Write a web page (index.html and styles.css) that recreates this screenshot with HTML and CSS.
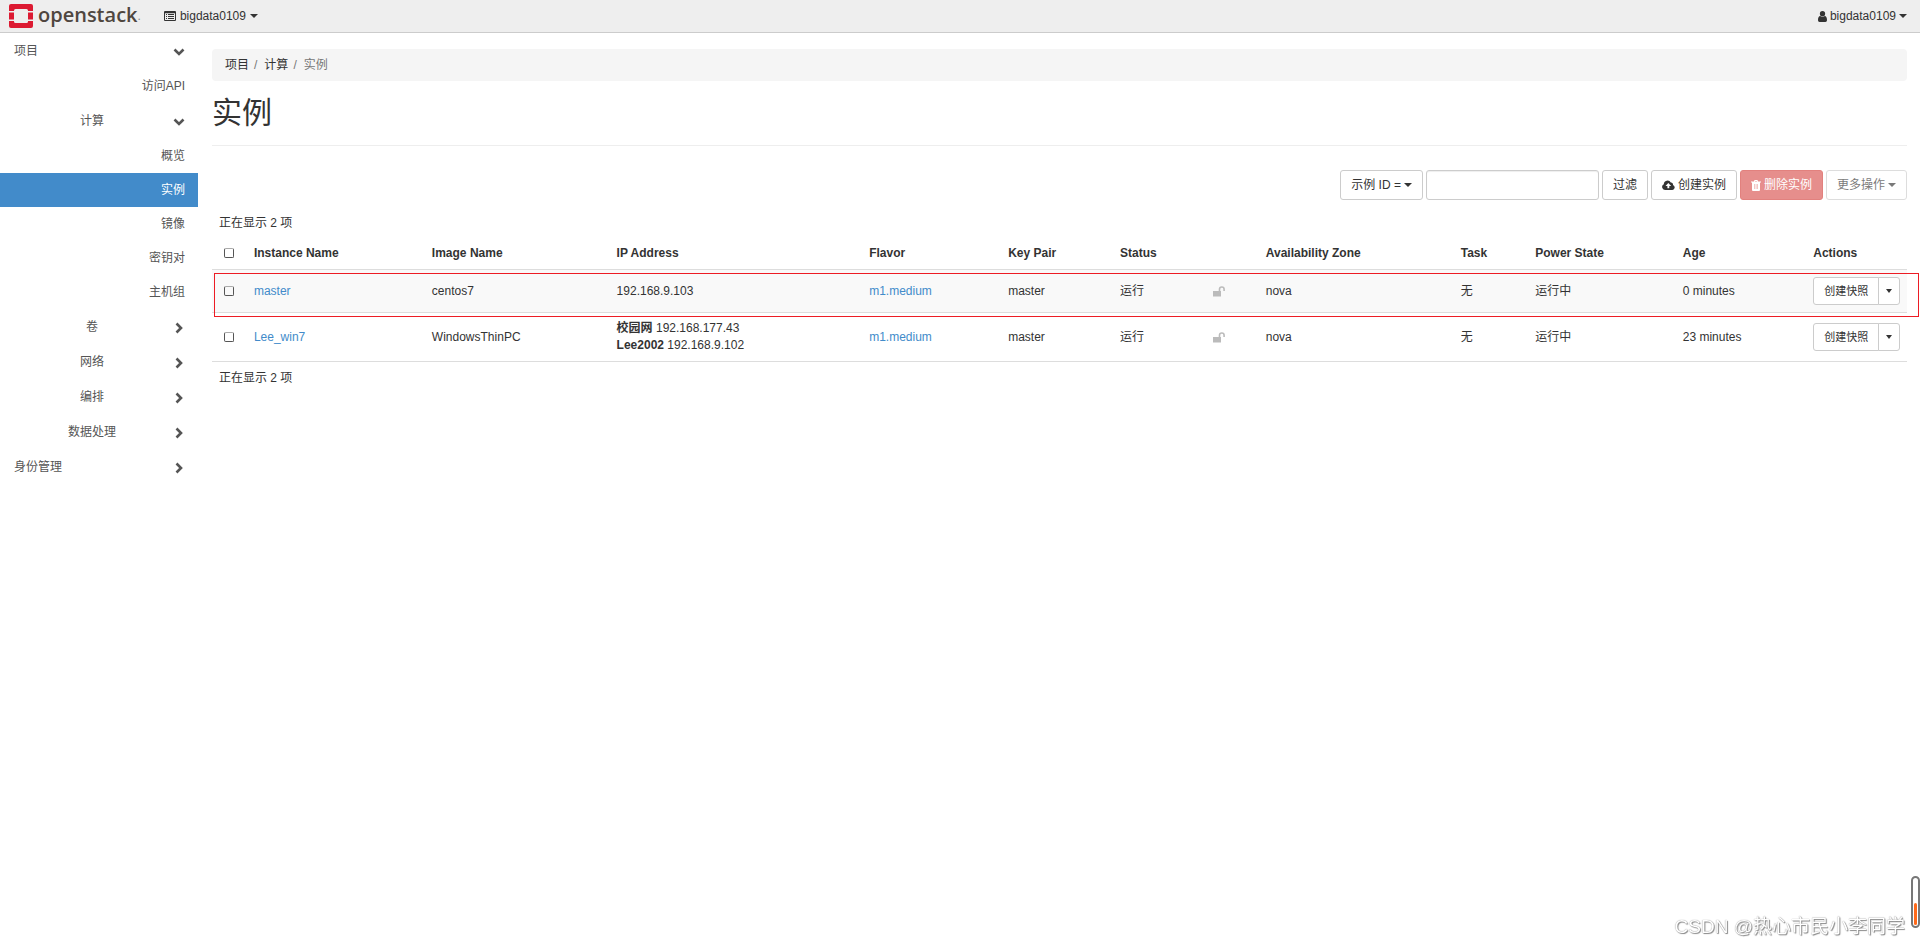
FILE: index.html
```html
<!DOCTYPE html>
<html lang="zh-CN">
<head>
<meta charset="utf-8">
<title>实例 - OpenStack Dashboard</title>
<link rel="stylesheet" href="styles.css">
</head>
<body>
<svg class="defs" aria-hidden="true">
  <symbol id="down" viewBox="0 0 12 8"><path d="M1.500 1.500 6 6l4.500-4.500" fill="none" stroke="currentColor" stroke-width="2.600"/></symbol>
  <symbol id="right" viewBox="0 0 8 12"><path d="M1.500 1.500 6 6 1.500 10.500" fill="none" stroke="currentColor" stroke-width="2.600"/></symbol>
  <symbol id="lock" viewBox="0 0 12 11"><path d="M0 5h8v5.500H0z" fill="currentColor"/><path d="M6.500 5.500V3.300a2.300 2.300 0 0 1 4.600 0V5" fill="none" stroke="currentColor" stroke-width="1.600"/></symbol>
</svg>

<header class="topbar">
  <a class="brand" href="#" aria-label="openstack">
    <svg class="brand-mark" viewBox="0 0 24 24" aria-hidden="true">
      <path fill="#dc1a32" d="M2 0h20a2 2 0 0 1 2 2v5h-5V6.500A1.500 1.500 0 0 0 17.500 5h-11A1.500 1.500 0 0 0 5 6.500V7H0V2a2 2 0 0 1 2-2zM0 8.500h5v7H0zM19 8.500h5v7h-5zM0 17h5v.5A1.500 1.500 0 0 0 6.500 19h11a1.500 1.500 0 0 0 1.500-1.500V17h5v5a2 2 0 0 1-2 2H2a2 2 0 0 1-2-2z"/>
    </svg>
    <span class="brand-name">openstack</span><span class="brand-dot">.</span>
  </a>
  <button class="top-menu" type="button">
    <svg width="12" height="10" viewBox="0 0 12 10" aria-hidden="true"><path fill="currentColor" fill-rule="evenodd" d="M1 0h10a1 1 0 0 1 1 1v8a1 1 0 0 1-1 1H1a1 1 0 0 1-1-1V1a1 1 0 0 1 1-1zm0 2.300V9h10V2.300zM2 3h1v1H2zm2 0h6v1H4zM2 5h1v1H2zm2 0h6v1H4zM2 7h1v1H2zm2 0h6v1H4z"/></svg>
    bigdata0109 <span class="caret"></span>
  </button>
  <button class="top-menu user-menu" type="button">
    <svg width="9" height="11" viewBox="0 0 9 11" aria-hidden="true"><path fill="currentColor" d="M4.500 0a2.600 2.700 0 0 1 0 5.500 2.600 2.700 0 0 1 0-5.500zM2.300 5A3.200 3.200 0 0 0 6.700 5C8.300 5.200 9 6.600 9 9c0 1.200-.6 2-1.600 2H1.600C.6 11 0 10.200 0 9c0-2.400.7-3.800 2.300-4z"/></svg>
    bigdata0109 <span class="caret"></span>
  </button>
</header>

<div class="layout">
  <nav class="sidebar">
    <button class="item group" type="button"><span>项目</span><svg class="chev-down"><use href="#down"/></svg></button>
    <a class="item leaf" href="#">访问API</a>
    <button class="item group sub" type="button"><span>计算</span><svg class="chev-down"><use href="#down"/></svg></button>
    <a class="item leaf" href="#">概览</a>
    <a class="item leaf panel active" href="#">实例</a>
    <a class="item leaf panel" href="#">镜像</a>
    <a class="item leaf panel" href="#">密钥对</a>
    <a class="item leaf panel" href="#">主机组</a>
    <button class="item group sub" type="button"><span>卷</span><svg class="chev-right"><use href="#right"/></svg></button>
    <button class="item group sub" type="button"><span>网络</span><svg class="chev-right"><use href="#right"/></svg></button>
    <button class="item group sub" type="button"><span>编排</span><svg class="chev-right"><use href="#right"/></svg></button>
    <button class="item group sub" type="button"><span>数据处理</span><svg class="chev-right"><use href="#right"/></svg></button>
    <button class="item group" type="button"><span>身份管理</span><svg class="chev-right"><use href="#right"/></svg></button>
  </nav>

  <main class="content">
    <ol class="breadcrumb">
      <li><a href="#">项目</a></li>
      <li><a href="#">计算</a></li>
      <li class="current">实例</li>
    </ol>
    <h1>实例</h1>

    <form class="toolbar">
      <button class="btn" type="button">示例 ID = <span class="caret"></span></button>
      <input class="filter" type="text" aria-label="过滤">
      <button class="btn" type="button">过滤</button>
      <button class="btn" type="button"><svg width="13" height="10" viewBox="0 0 13 10" aria-hidden="true"><path fill="currentColor" fill-rule="evenodd" d="M3 10a3 3 0 0 1-1.200-5.700A3.700 3.700 0 0 1 8.800 2.600 2 2 0 0 1 11 5a2.600 2.600 0 0 1-.6 5zM6.300 3 3.500 5.900h1.900v2.400h1.900V5.900h1.900z"/></svg> 创建实例</button>
      <button class="btn danger" type="button" disabled><svg width="10" height="11" viewBox="0 0 10 11" aria-hidden="true"><path fill="currentColor" fill-rule="evenodd" d="M3 1.500 3.500 0h3L7 1.500h3v1H9V10a1 1 0 0 1-1 1H2a1 1 0 0 1-1-1V2.500H0v-1zm1 0h2L5.800 1H4.200zM3 4v5h.5V4zm1.800 0v5h.5V4zm1.700 0v5H7V4z"/></svg> 删除实例</button>
      <button class="btn" type="button" disabled>更多操作<span class="caret"></span></button>
    </form>

    <p class="count">正在显示 2 项</p>
    <div class="table-wrap">
      <table>
        <colgroup>
          <col class="c-check"><col class="c-name"><col class="c-image"><col class="c-ip"><col class="c-flavor"><col class="c-key"><col class="c-status"><col class="c-lock"><col class="c-zone"><col class="c-task"><col class="c-power"><col class="c-age"><col class="c-actions">
        </colgroup>
        <thead>
          <tr>
            <th><input type="checkbox" aria-label="全选"></th>
            <th>Instance Name</th><th>Image Name</th><th>IP Address</th><th>Flavor</th><th>Key Pair</th><th>Status</th><th></th><th>Availability Zone</th><th>Task</th><th>Power State</th><th>Age</th><th>Actions</th>
          </tr>
        </thead>
        <tbody>
          <tr class="striped">
            <td><input type="checkbox" aria-label="master"></td>
            <td><a href="#">master</a></td><td>centos7</td><td>192.168.9.103</td><td><a href="#">m1.medium</a></td><td>master</td><td>运行</td>
            <td><svg class="lock"><use href="#lock"/></svg></td>
            <td>nova</td><td>无</td><td>运行中</td><td>0 minutes</td>
            <td><div class="split"><button class="btn small" type="button">创建快照</button><button class="btn small toggle" type="button" aria-label="更多"><span class="caret"></span></button></div></td>
          </tr>
          <tr>
            <td><input type="checkbox" aria-label="Lee_win7"></td>
            <td><a href="#">Lee_win7</a></td><td>WindowsThinPC</td><td><b>校园网</b> 192.168.177.43<br><b>Lee2002</b> 192.168.9.102</td><td><a href="#">m1.medium</a></td><td>master</td><td>运行</td>
            <td><svg class="lock"><use href="#lock"/></svg></td>
            <td>nova</td><td>无</td><td>运行中</td><td>23 minutes</td>
            <td><div class="split"><button class="btn small" type="button">创建快照</button><button class="btn small toggle" type="button" aria-label="更多"><span class="caret"></span></button></div></td>
          </tr>
        </tbody>
      </table>
      <div class="highlight"></div>
    </div>
    <p class="count">正在显示 2 项</p>
  </main>
</div>

<div class="watermark">CSDN @热心市民小李同学</div>
<div class="gauge"><div class="gauge-level"></div></div>
</body>
</html>
```

FILE: styles.css
```css
* { box-sizing: border-box; }

body {
  margin: 0;
  min-height: 100vh;
  background: #fff;
  color: #333;
  font: 12px/17px "Liberation Sans", "Noto Sans CJK SC", sans-serif;
}

button, input { font: inherit; color: inherit; }
button { background: none; border: 0; padding: 0; }
a { color: #428bca; text-decoration: none; }
.defs { display: none; }

.caret {
  display: inline-block;
  vertical-align: middle;
  border: 4px solid transparent;
  border-top-color: currentColor;
  border-bottom: 0;
}

/* Top bar */
.topbar {
  display: flex;
  align-items: center;
  height: 33px;
  padding: 0 13px 0 9px;
  background: #eee;
  border-bottom: 1px solid #ccc;
}
.brand { display: flex; align-items: center; color: #4f463f; }
.brand-mark { width: 24px; height: 24px; margin-right: 5px; }
.brand-name { padding-bottom: 2px; font: 600 20px/26px "Open Sans", "Noto Sans", sans-serif; }
.brand-dot { color: #888; }
.top-menu { display: flex; align-items: center; gap: 4px; margin-left: 23px; }
.user-menu { gap: 3px; margin-left: auto; }

/* Sidebar */
.layout { display: flex; }
.sidebar { flex: 0 0 198px; display: flex; flex-direction: column; }
.item {
  display: flex;
  align-items: center;
  height: 35px;
  padding: 2px 13px 0 14px;
  color: #555;
  text-align: left;
}
.item span { flex: 1; }
.sub span { text-align: center; }
.sub { padding-left: 11px; }
.leaf { justify-content: flex-end; }
.panel { height: 34px; padding-top: 0; }
.active { background: #428bca; color: #fff; }
.chev-down { width: 12px; height: 8px; }
.chev-right { width: 8px; height: 12px; margin: 0 2px; }

/* Content */
.content { flex: 1; min-width: 0; padding: 16px 13px 0 14px; }
.breadcrumb {
  display: flex;
  align-items: center;
  height: 32px;
  margin: 0;
  padding: 0 13px;
  list-style: none;
  background: #f5f5f5;
  border-radius: 4px;
}
.breadcrumb a { color: #333; }
.breadcrumb li + li::before { content: "/"; padding: 0 7px 0 5px; color: #777; }
.current { color: #777; }
h1 {
  margin: 0 0 24px;
  padding: 15px 0;
  font-size: 30px;
  line-height: 34px;
  font-weight: 400;
  border-bottom: 1px solid #eee;
}

.toolbar { display: flex; justify-content: flex-end; gap: 3px; margin-bottom: 12px; }
.btn {
  display: flex;
  align-items: center;
  gap: 3px;
  height: 30px;
  padding: 0 10px;
  background: #fff;
  border: 1px solid #ccc;
  border-radius: 3px;
}
.btn:disabled { opacity: .65; }
.btn.danger { background: #d9534f; border-color: #d43f3a; color: #fff; }
.filter {
  width: 173px;
  height: 30px;
  padding: 0 8px;
  border: 1px solid #ccc;
  border-radius: 3px;
  box-shadow: inset 0 1px 1px #eee;
}

.count { margin: 0; padding: 1px 7px 0; line-height: 20px; }

/* Instances table */
.table-wrap { position: relative; margin-bottom: 5px; }
table { width: 100%; table-layout: fixed; border-collapse: separate; border-spacing: 0; }
th, td { padding: 7px 8px; text-align: left; vertical-align: middle; border-bottom: 1px solid #ddd; }
th { height: 37px; padding: 10px 8px 6px; white-space: nowrap; }
td { height: 43px; }
tbody tr:last-child td { height: 49px; }
.striped td { background: #f9f9f9; }
th:first-child, td:first-child { padding-left: 12px; }
.c-check { width: 2%; }
.c-name { width: 10.5%; }
.c-image { width: 10.9%; }
.c-ip { width: 14.9%; }
.c-flavor { width: 8.2%; }
.c-key { width: 6.6%; }
.c-status { width: 5.5%; }
.c-lock { width: 3.1%; }
.c-zone { width: 11.5%; }
.c-task { width: 4.4%; }
.c-power { width: 8.7%; }
.c-age { width: 7.7%; }
.c-actions { width: 6%; }

input[type="checkbox"] {
  appearance: none;
  display: block;
  width: 10px;
  height: 10px;
  margin: 0;
  border: 1px solid #555;
  border-top-color: #aaa;
  border-radius: 2px;
}
.lock { display: block; width: 12px; height: 11px; color: #bbb; }
.split { display: flex; }
.small { height: 28px; border-radius: 3px 0 0 3px; font-size: 11px; white-space: nowrap; }
.toggle { margin-left: -1px; padding: 0 7px; border-radius: 0 3px 3px 0; }
.small .caret { border-width: 4px 3px 0; }

/* Frame drawn over the first row */
.highlight {
  position: absolute;
  top: 40px;
  left: 2px;
  right: -12px;
  height: 44px;
  border: 1px solid #ed1c24;
  pointer-events: none;
}

/* Overlays */
.watermark {
  position: fixed;
  right: 15px;
  bottom: 5px;
  color: #fff;
  font-size: 19px;
  line-height: 28px;
  text-shadow: 0 0 1px #777, 1px 1px 1px #888;
}
.gauge {
  position: fixed;
  right: 0;
  bottom: 18px;
  width: 9px;
  height: 52px;
  padding: 1px;
  display: flex;
  align-items: flex-end;
  border: 2px solid #777;
  border-radius: 5px;
  background: #fff;
}
.gauge-level { width: 100%; height: 22px; background: #ff6a1a; border-radius: 2px; }
```
